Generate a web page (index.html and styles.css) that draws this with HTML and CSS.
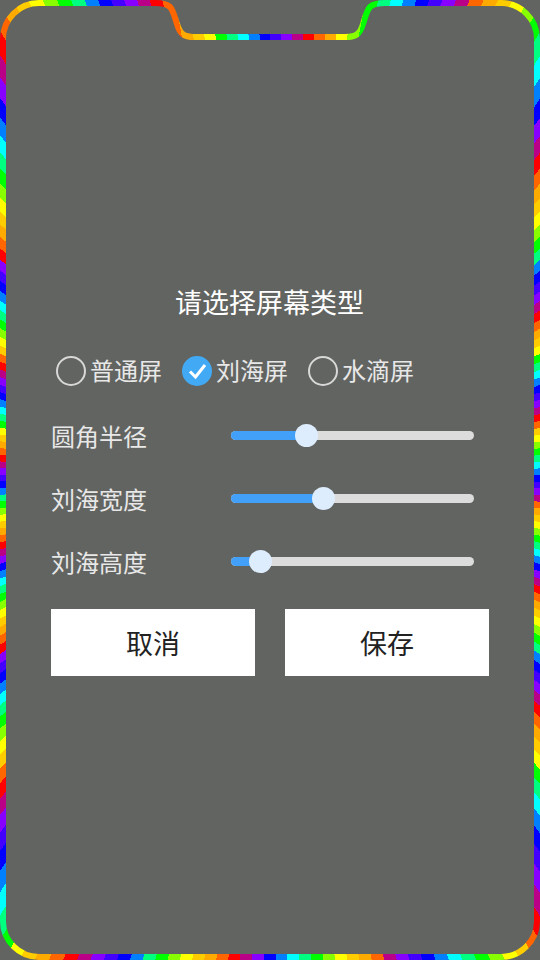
FILE: index.html
```html
<!DOCTYPE html>
<html lang="zh">
  <head>
    <meta charset="UTF-8" />
    <meta name="viewport" content="width=device-width, initial-scale=1.0" />
    <title>屏幕类型</title>
    <link rel="stylesheet" href="styles.css">
  </head>
  <body>
    <svg class="frame" width="540" height="960" viewBox="0 0 540 960">
      <mask id="frameMask" maskUnits="userSpaceOnUse" x="0" y="0" width="540" height="960">
        <path fill="none" stroke="#fff" stroke-width="6" d="M3 39 A36 36 0 0 1 39 3 H155 C172 3 172 8 177 24 C180 34 184 37 194 37 H346 C356 37 360 34 363 24 C368 8 368 3 385 3 H501 A36 36 0 0 1 537 39 V921 A36 36 0 0 1 501 957 H39 A36 36 0 0 1 3 921 Z" />
      </mask>
      <foreignObject x="0" y="0" width="540" height="960" mask="url(#frameMask)">
        <div class="rainbow" id="rainbow"></div>
      </foreignObject>
    </svg>

    <div class="dialog">
      <h1 class="title">请选择屏幕类型</h1>

      <div class="radio-row">
        <label class="radio"><span class="radio-mark"></span>普通屏</label>
        <label class="radio">
          <span class="radio-mark checked">
            <svg width="30" height="30" viewBox="0 0 30 30"><path d="M8 15.5 L13.5 21 L23 9" fill="none" stroke="#fff" stroke-width="3" /></svg>
          </span>刘海屏
        </label>
        <label class="radio"><span class="radio-mark"></span>水滴屏</label>
      </div>

      <div class="slider-list">
        <div class="slider-row">
          <span class="slider-label">圆角半径</span>
          <div class="slider"><div class="slider-fill" style="width: 75px"></div><div class="slider-thumb" style="left: 64px"></div></div>
        </div>
        <div class="slider-row">
          <span class="slider-label">刘海宽度</span>
          <div class="slider"><div class="slider-fill" style="width: 92px"></div><div class="slider-thumb" style="left: 81px"></div></div>
        </div>
        <div class="slider-row">
          <span class="slider-label">刘海高度</span>
          <div class="slider"><div class="slider-fill" style="width: 29px"></div><div class="slider-thumb" style="left: 18px"></div></div>
        </div>
      </div>

      <div class="btn-row">
        <button class="btn">取消</button>
        <button class="btn">保存</button>
      </div>
    </div>
    <script src="script.js"></script>
  </body>
</html>
```

FILE: styles.css
```css
* {
  margin: 0;
  padding: 0;
  box-sizing: border-box;
}

body {
  width: 540px;
  height: 960px;
  overflow: hidden;
  background: #626461;
  font-family: "Noto Sans CJK SC", "Noto Sans", sans-serif;
  color: #fff;
}

.frame {
  position: absolute;
  top: 0;
  left: 0;
}

.rainbow {
  width: 540px;
  height: 960px;
}

.dialog {
  position: relative;
  padding: 282px 51px 0;
}

.title {
  padding-right: 1px;
  font-size: 27px;
  font-weight: 400;
  line-height: 40px;
  text-align: center;
}

.radio-row {
  display: flex;
  gap: 20px;
  margin-top: 28px;
  padding-left: 5px;
}

.radio {
  display: flex;
  align-items: center;
  gap: 4px;
  font-size: 24px;
  line-height: 40px;
  color: #e8e8e8;
}

.radio-mark {
  width: 30px;
  height: 30px;
  margin-top: 1px;
  border: 2.5px solid #d8d8d8;
  border-radius: 50%;
}

.radio-mark.checked {
  border: none;
  background: #42aaf5;
}

.slider-list {
  margin-top: 14px;
}

.slider-row {
  display: flex;
  align-items: center;
  height: 63px;
}

.slider-label {
  width: 180px;
  font-size: 24px;
  color: #e8e8e8;
}

.slider {
  position: relative;
  width: 243px;
  height: 9px;
  border-radius: 5px;
  background: #dcdcdc;
}

.slider-fill {
  height: 9px;
  border-radius: 5px;
  background: #42a0f8;
}

.slider-thumb {
  position: absolute;
  top: -7px;
  width: 23px;
  height: 23px;
  border-radius: 50%;
  background: #deedfd;
}

.btn-row {
  display: flex;
  justify-content: space-between;
  margin-top: 16px;
}

.btn {
  width: 204px;
  height: 67px;
  border: none;
  background: #fff;
  color: #222;
  font-family: inherit;
  font-size: 27px;
}
```

FILE: script.js
```js
// rainbow border: a sweep of narrow bands, the colour cycle repeats every 18deg
const palette = [
  "#ff0000", "#ff6600", "#ffaa00", "#ffcc00", "#ffff00", "#88ff00", "#00ff00",
  "#00ff80", "#00ffff", "#0080ff", "#0000ff", "#4400ff", "#8800ff", "#bb0088",
];
const bandAngle = 1.412;
const step = (14 * bandAngle) / 18;
const phase = 11.5;

const stops = [];
for (let k = 0; k * bandAngle < 360; k++) {
  const index = Math.floor(k * step + phase) % 14;
  const from = k * bandAngle;
  const to = Math.min(from + bandAngle, 360);
  stops.push(`${palette[index]} ${from.toFixed(3)}deg ${to.toFixed(3)}deg`);
}

document.getElementById("rainbow").style.background =
  `conic-gradient(from 0deg at 270px 480px, ${stops.join(", ")})`;
```
